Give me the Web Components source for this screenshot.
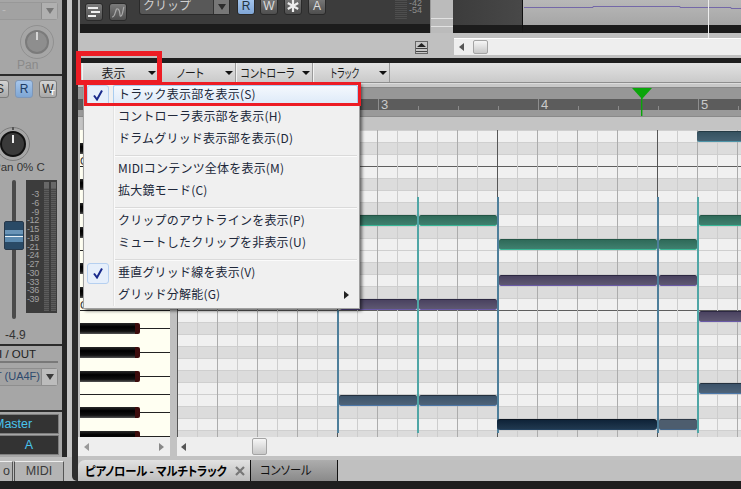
<!DOCTYPE html>
<html lang="ja">
<head>
<meta charset="utf-8">
<title>ピアノロール</title>
<style>
  html, body { margin: 0; padding: 0; background: #bcbcbc; }
  body { font-family: "Noto Sans CJK JP", "Noto Sans", sans-serif; font-size: 12px; color: #222; }
</style>
</head>
<body>
<daw-window>
  <mixer-strip></mixer-strip>
  <daw-main>
    <top-band></top-band>
    <lane-scroll></lane-scroll>
    <view-toolbar>
      <tool-menu>表示</tool-menu>
      <tool-menu style="--sx:.9">ノート</tool-menu>
      <tool-menu style="--sx:.83">コントローラ</tool-menu>
      <tool-menu style="--sx:.72">トラック</tool-menu>
    </view-toolbar>
    <time-ruler></time-ruler>
    <piano-roll>
      <piano-keys></piano-keys>
      <note-grid></note-grid>
    </piano-roll>
    <roll-scrolls></roll-scrolls>
    <tab-row></tab-row>
  </daw-main>

  <view-menu>
    <menu-item checked hot>トラック表示部を表示(S)</menu-item>
    <menu-item>コントローラ表示部を表示(H)</menu-item>
    <menu-item>ドラムグリッド表示部を表示(D)</menu-item>
    <menu-sep></menu-sep>
    <menu-item>MIDIコンテンツ全体を表示(M)</menu-item>
    <menu-item>拡大鏡モード(C)</menu-item>
    <menu-sep></menu-sep>
    <menu-item>クリップのアウトラインを表示(P)</menu-item>
    <menu-item>ミュートしたクリップを非表示(U)</menu-item>
    <menu-sep></menu-sep>
    <menu-item checked>垂直グリッド線を表示(V)</menu-item>
    <menu-item sub>グリッド分解能(G)</menu-item>
  </view-menu>
  <red-box style="left:76px;top:51px;width:86px;height:34px;border-width:5px"></red-box>
  <red-box style="left:84px;top:82px;width:277px;height:24px;border-width:3px"></red-box>
</daw-window>

<script>
class ShadowBase extends HTMLElement {
    constructor(html) {
        super();
        this.attachShadow({ mode: 'open' }).innerHTML = html;
    }
}

const LATIN = '"Liberation Sans", "Noto Sans", sans-serif';

class DawWindow extends ShadowBase {
    constructor() {
        super(`<style>
            :host { display: flex; position: relative; width: 741px; height: 489px; overflow: hidden; background: #bcbcbc; }
        </style><slot></slot>`);
    }
}

class DawMain extends ShadowBase {
    constructor() {
        super(`<style>
            :host { display: flex; flex-direction: column; width: 663px; height: 489px; }
        </style><slot></slot>`);
    }
}

class MixerStrip extends ShadowBase {
    constructor() {
        const scale = [3, 6, 9, 12, 15, 18, 21, 24, 27, 30, 33, 36, 39].map(n => `<span>-${n}</span>`).join('');
        super(`<style>
            :host { display: flex; flex-direction: column; width: 78px; height: 489px; flex: none; font-family: ${LATIN}; }
            .body { display: flex; height: 481px; }
            .left { width: 72px; display: flex; flex-direction: column; }
            .upper { display: flex; height: 457px; }
            .strip { width: 62px; overflow: hidden; background: #a6a6a6; display: flex; flex-direction: column; }
            .black { width: 5px; background: #262626; }
            .light { width: 5px; background: #c6c6c6; }
            .dark { width: 6px; background: #2e2e2e; border-radius: 0 0 0 5px; }
            .bar { height: 8px; background: #1e1e1e; }
            .sec1 { height: 74px; display: flex; flex-direction: column; }
            .sel { display: flex; height: 18px; margin: 2px 4px 0 -4px; border: 1px solid #989898; border-radius: 3px; background: #a2a2a2; box-sizing: border-box; color: #bbb; line-height: 15px; }
            .sel .v { flex: 1; padding-left: 5px; white-space: nowrap; overflow: hidden; }
            .sel .a { width: 15px; border-left: 1px solid #8c8c8c; display: flex; align-items: center; justify-content: center; background: #b0b0b0; }
            .tri { width: 0; height: 0; border-left: 4px solid transparent; border-right: 4px solid transparent; border-top: 6px solid #3a3a3a; }
            .knob1 { display: block; margin: 5px 0 0 20px; }
            .pan { color: #8a8a8a; font-size: 12px; line-height: 14px; margin: -1px 0 0 17px; }
            .rule { height: 2px; background: #2c2c2c; flex: none; }
            .sec2 { height: 268px; flex: none; }
            .btns { display: flex; gap: 6px; margin: 4px 0 0 -9px; }
            .btn { width: 18px; height: 18px; box-sizing: border-box; border-radius: 3px; border: 1px solid #7c7c7c; background: linear-gradient(#d4d4d4, #a8a8a8); display: flex; align-items: center; justify-content: center; color: #333; font-size: 12px; position: relative; }
            .btn.on { background: linear-gradient(#a6c6ec, #7fa6d4); border-color: #7e97b8; color: #1e3c66; }
            .btn sub { position: absolute; right: 1px; bottom: 0; color: #fff; font-size: 8px; line-height: 8px; font-weight: bold; }
            .knob2 { display: block; margin: 28px 0 0 -5px; }
            .pan2 { white-space: nowrap; font-size: 11.5px; line-height: 12px; margin: -1px 0 0 -7px; color: #333; }
            .fade { position: relative; display: flex; margin-top: 7px; height: 139px; }
            .slotw { width: 26px; display: flex; justify-content: center; }
            .slot { width: 4px; margin-left: 2px; background: #4a4a4a; border-radius: 2px; }
            .cap { position: absolute; left: 4px; top: 41px; width: 20px; height: 29px; box-sizing: border-box; border-radius: 2px; border: 1px solid #27384a;
                   background: linear-gradient(#2a4a66 0 8px, #6a95b8 8px 12px, #3f6d92 12px 14px, #e9f1f6 14px 15px, #5d8bb0 15px 20px, #2a4a66 20px); }
            .meter { width: 31px; height: 133px; background: #3c3c3c; display: flex; }
            .nums { width: 13px; padding: 10px 0 0 0; display: flex; flex-direction: column; align-items: flex-end; font-size: 9px; letter-spacing: -.3px; color: #a2a2a2; flex: none; }
            .nums span { height: 8.75px; line-height: 8.75px; }
            .cols { display: flex; gap: 2px; margin: 2px 0 0 5px; }
            .col { width: 5px; height: 129px; background: linear-gradient(#686868 0 6px, transparent 6px), repeating-linear-gradient(#5c5c5c 0 1px, #484848 1px 2px); }
            .val { line-height: 14px; margin: 9px 0 0 5px; color: #333; }
            .sec3 { height: 64px; flex: none; }
            .io { font-size: 11.5px; line-height: 14px; padding-top: 1px; margin-left: -22px; white-space: nowrap; color: #222; }
            .hr { height: 2px; background: #797979; margin: 0 4px 0 0; }
            .sel2 { display: flex; height: 18px; margin: 5px 4px 0 -4px; border: 1px solid #8e8e8e; border-radius: 3px; box-sizing: border-box; background: #a2a2a2; color: #2e4a6e; line-height: 15px; }
            .sel2 .v { flex: 1; display: flex; justify-content: flex-end; white-space: nowrap; overflow: hidden; padding-right: 1px; font-size: 11px; }
            .sel2 .a { width: 15px; border-left: 1px solid #8c8c8c; display: flex; align-items: center; justify-content: center; background: #bcbcbc; flex: none; }
            .sec4 { flex: 1; padding-top: 2px; }
            .f { height: 18px; background: #333; border: 1px solid #7e7e7e; border-left: 0; margin-right: 3px; color: #49c4ee; line-height: 18px; font-size: 12.5px; white-space: nowrap; overflow: hidden; }
            .f + .f { margin-top: 1px; text-align: center; }
            .tabs { height: 24px; background: #bdbdbd; display: flex; padding-top: 4px; box-sizing: border-box; }
            .tab { border: 1px solid #4e4e4e; border-bottom: 0; border-top-color: #eee; border-right-color: #555; background: #b4b4b4; color: #3a3a3a; line-height: 19px; text-align: center; box-sizing: border-box; font-size: 12.5px; }
            .t1 { width: 13px; text-align: right; border-left: 0; overflow: hidden; padding-right: 2px; }
            .t2 { width: 50px; margin-left: 1px; }
        </style>
        <div class="body">
          <div class="left">
            <div class="upper">
              <div class="strip">
                <div class="sec1">
                  <div class="sel"><div class="v">-</div><div class="a"><div class="tri" style="border-top-color:#777"></div></div></div>
                  <svg class="knob1" width="34" height="34" viewBox="0 0 34 34">
                    <circle cx="17" cy="17" r="16.5" fill="none" stroke="#909090"/>
                    <circle cx="17" cy="17" r="11" fill="#8e8e8e" stroke="#7b7b7b" stroke-width="2"/>
                    <line x1="17" y1="7" x2="17" y2="15" stroke="#d6d6d6" stroke-width="2"/>
                  </svg>
                  <div class="pan">Pan</div>
                </div>
                <div class="rule"></div>
                <div class="sec2">
                  <div class="btns">
                    <div class="btn">S</div>
                    <div class="btn on">R</div>
                    <div class="btn">W<sub>T</sub></div>
                  </div>
                  <svg class="knob2" width="36" height="36" viewBox="0 0 36 36">
                    <circle cx="18" cy="18" r="16.5" fill="none" stroke="#7c7c7c"/>
                    <circle cx="18" cy="18" r="12" fill="#3a3a3a" stroke="#111" stroke-width="2"/>
                    <line x1="18" y1="9" x2="18" y2="17" stroke="#eee" stroke-width="2"/>
                    <line x1="18" y1="1" x2="18" y2="4" stroke="#555" stroke-width="2"/>
                  </svg>
                  <div class="pan2">Pan 0% C</div>
                  <div class="fade">
                    <div class="slotw"><div class="slot"></div></div>
                    <div class="meter">
                      <div class="nums">${scale}</div>
                      <div class="cols"><div class="col"></div><div class="col"></div></div>
                    </div>
                    <div class="cap"></div>
                  </div>
                  <div class="val">-4.9</div>
                </div>
                <div class="rule"></div>
                <div class="sec3">
                  <div class="io">MIDI / OUT</div>
                  <div class="hr"></div>
                  <div class="sel2"><div class="v">T (UA4F)</div><div class="a"><div class="tri"></div></div></div>
                </div>
                <div class="rule"></div>
                <div class="sec4">
                  <div class="f" style="margin-left:-6px">Master</div>
                  <div class="f">A</div>
                </div>
              </div>
              <div class="black"></div>
              <div class="light"></div>
            </div>
            <div class="tabs"><div class="tab t1">o</div><div class="tab t2">MIDI</div></div>
          </div>
          <div class="dark"></div>
        </div>
        <div class="bar"></div>`);
    }
}

class TopBand extends ShadowBase {
    constructor() {
        super(`<style>
            :host { display: flex; position: relative; height: 33px; flex: none; }
            .edge { width: 2px; background: #b4b4b4; }
            .panel { width: 350px; background: #1c1c1c; }
            .inner { height: 24px; background: #3c3c3c; display: flex; align-items: flex-start; overflow: hidden; position: relative; }
            .b { width: 18px; height: 18px; box-sizing: border-box; border-radius: 3px; border: 1px solid #2a2a2a; background: linear-gradient(#7b7b7b, #4e4e4e); display: flex; align-items: center; justify-content: center; color: #ddd; font: 12px ${LATIN}; flex: none; }
            .sel { width: 91px; height: 15px; margin-left: 12px; box-sizing: border-box; background: #585858; border: 1px solid #2a2a2a; border-top: 0; border-radius: 0 0 3px 3px; color: #cfcfcf; line-height: 10px; padding-left: 3px; display: flex; justify-content: space-between; flex: none; }
            .sel i { width: 15px; border-left: 1px solid #333; background: #777; display: flex; align-items: center; justify-content: center; }
            .tri { width: 0; height: 0; border-left: 4px solid transparent; border-right: 4px solid transparent; border-top: 6px solid #2c2c2c; }
            .s { margin-top: -3px; }
            .on { background: linear-gradient(#a8c8ee, #80a6d6); color: #234; }
            .meter { width: 12px; height: 20px; margin-left: 69px; background: repeating-linear-gradient(#4e4e4e 0 1px, #3c3c3c 1px 2px); border-radius: 0 0 2px 2px; flex: none; }
            .nums { margin-left: 2px; font: 9px/7px ${LATIN}; color: #8c8c8c; }
            .col { width: 23px; background: #bbb; box-sizing: border-box; position: relative; border-left: 1px solid #999; }
            .col i { display: block; position: absolute; left: 0; right: 0; height: 1px; background: #e2e2e2; }
            .gap { width: 70px; background: linear-gradient(90deg, #3c3c3c, #484848); border-bottom: 8px solid #1c1c1c; border-right: 1px solid #111; box-sizing: border-box; }
            .lane { flex: 1; border-bottom: 8px solid #1c1c1c; background: linear-gradient(#b8b8b8, #a6a6a6); }
            .lane svg { display: block; }
            .pos { position: absolute; left: 630px; top: 0; width: 1px; height: 38px; background: #eee; }
        </style>
        <div class="edge"></div>
        <div class="panel"><div class="inner">
          <div class="b" style="margin:3px 0 0 5px">
            <svg width="14" height="12" viewBox="0 0 14 12"><path d="M1 2h10M4 6h9M1 10h8" stroke="#eee" stroke-width="2" fill="none"/></svg>
          </div>
          <div class="b" style="margin:3px 0 0 6px">
            <svg width="14" height="12" viewBox="0 0 14 12"><path d="M1 11C5 11 4 1 7 3s1 8 3 7 2-8 3-9" stroke="#aaa" stroke-width="1.2" fill="none"/></svg>
          </div>
          <div class="sel">クリップ<i><span class="tri"></span></i></div>
          <div class="b s on" style="margin-left:7px">R</div>
          <div class="b s" style="margin-left:5px">W</div>
          <div class="b s" style="margin-left:6px">
            <svg width="12" height="12" viewBox="0 0 12 12"><path d="M6 0v12M.8 3l10.4 6M.8 9l10.4-6" stroke="#eee" stroke-width="2.2"/></svg>
          </div>
          <div class="b s" style="margin-left:6px">A</div>
          <div class="meter"></div>
          <div class="nums">-42<br>-54</div>
        </div></div>
        <div class="col"><i style="top:18px"></i><i style="top:26px"></i></div>
        <div class="gap"></div>
        <div class="lane">
          <svg width="218" height="25"><path d="M1 7.5H70V6.5H157V7.5H208V8.5H218" stroke="#7468a8" fill="none"/></svg>
        </div>
        <div class="pos"></div>`);
    }
}

class ScrollTrack extends ShadowBase {
    constructor() {
        super(`<style>
            :host { display: flex; align-items: center; position: relative; background: #eee; box-sizing: border-box; }
            .l, .r { width: 0; height: 0; border-top: 4px solid transparent; border-bottom: 4px solid transparent; flex: none; }
            .l { border-right: 5px solid #555; }
            .r { border-left: 5px solid #888; margin-left: auto; }
            .t { position: absolute; top: 1px; bottom: 1px; width: 15px; box-sizing: border-box; border: 1px solid #a4a4a4; border-radius: 2px; background: linear-gradient(#f6f6f6, #c8c8c8); }
        </style><div class="l"></div><div class="r"></div><div class="t"></div>`);
    }
    connectedCallback() {
        const sd = this.shadowRoot;
        sd.querySelector('.l').style.marginLeft = (this.getAttribute('arrow') || 5) + 'px';
        const l = sd.querySelector('.l');
        if (this.hasAttribute('lgray')) l.style.borderRightColor = '#999';
        const r = sd.querySelector('.r');
        if (this.hasAttribute('end')) { r.style.marginRight = this.getAttribute('end') + 'px'; } else { r.style.display = 'none'; }
        const t = sd.querySelector('.t');
        if (this.hasAttribute('thumb')) { t.style.left = this.getAttribute('thumb') + 'px'; } else { t.style.display = 'none'; }
    }
}

class LaneScroll extends ShadowBase {
    constructor() {
        super(`<style>
            :host { display: flex; height: 25px; flex: none; background: #c0c0c0; justify-content: space-between; padding-top: 5px; box-sizing: border-box; }
            .eject { margin: 3px 0 0 337px; width: 13px; height: 13px; box-sizing: border-box; background: #c6c6c6; border: 1px solid #666; display: flex; flex-direction: column; align-items: center; }
            .eject svg { display: block; }
            scroll-track { width: 287px; height: 17px; border-top: 1px solid #fff; }
        </style>
        <div class="eject"><svg width="11" height="11" viewBox="0 0 11 11"><path d="M5.5 1L10 5H1z" fill="#222"/><path d="M0 6.5h11M0 9.5h11" stroke="#444"/></svg></div>
        <scroll-track arrow="5" thumb="19"></scroll-track>`);
    }
}

class ViewToolbar extends ShadowBase {
    constructor() {
        super(`<style>
            :host { display: flex; height: 25px; flex: none; box-sizing: border-box; border-top: 5px solid #1e1e1e; padding-left: 4px;
                    background: linear-gradient(#e2e2e2, #cacaca); border-bottom: 1px solid #8e8e8e; }
        </style><slot></slot>`);
    }
}

class ToolMenu extends ShadowBase {
    constructor() {
        super(`<style>
            :host { display: flex; align-items: center; width: 77px; box-sizing: border-box; border-right: 1px solid #9a9a9a; border-left: 1px solid #f2f2f2; color: #1c1c1c; }
            .lab { width: 61px; display: flex; justify-content: center; }
            .lab span { display: inline-block; transform: scaleX(var(--sx, 1)); font-feature-settings: "palt"; white-space: nowrap; font-size: 12px; line-height: 16px; }
            .tri { margin-left: 4px; width: 0; height: 0; border-left: 4px solid transparent; border-right: 4px solid transparent; border-top: 4px solid #111; }
        </style><div class="lab"><span><slot></slot></span></div><span class="tri"></span>`);
    }
}

class TimeRuler extends ShadowBase {
    constructor() {
        const cells = [2, 3, 4, 5].map(n => `<div class="cell">${n}</div>`).join('');
        super(`<style>
            :host { display: block; position: relative; height: 47px; flex: none; background: #c4c4c4; border-top: 1px solid #dcdcdc; box-sizing: border-box; overflow: hidden; }
            .a { height: 3px; background: #c8c8c8; border-bottom: 1px solid #888; }
            .b { height: 11px; background: #979797; }
            .c { height: 11px; background-color: #5c5c5c; display: flex; padding-left: 140px;
                 background-image: repeating-linear-gradient(90deg, #8a8a8a 0 1px, transparent 1px 40px); background-size: 100% 4px; background-position: 20px 100%; background-repeat: no-repeat; }
            .cell { width: 160px; flex: none; box-sizing: border-box; border-left: 1px solid #8e8e8e; padding-left: 2px; color: #cacaca; font: 13px/12px ${LATIN}; }
            .d { height: 7px; background: #9a9a9a; border-bottom: 1px solid #8a8a8a; box-sizing: border-box; }
            .e { height: 13px; background: #c4c4c4; border-bottom: 1px solid #9c9c9c; box-sizing: content-box; }
            .mark { position: absolute; left: 553px; top: 4px; }
        </style>
        <div class="a"></div><div class="b"></div><div class="c">${cells}</div><div class="d"></div><div class="e"></div>
        <svg class="mark" width="22" height="29" viewBox="0 0 22 29"><path d="M1 0H21L11 11z" fill="#0aa50a"/><rect x="10" y="10" width="1.4" height="18" fill="#0aa50a"/></svg>`);
    }
}

class PianoRoll extends ShadowBase {
    constructor() {
        super(`<style>
            :host { display: flex; height: 307px; flex: none; overflow: hidden; background: #c0c0c0; padding-left: 2px; }
        </style><slot></slot>`);
    }
}

const BLACK_ROWS = [1, 4, 6, 8, 11];

class PianoKeys extends ShadowBase {
    constructor() {
        let rows = '';
        for (let k = 0; k < 26; k++) {
            const m = k % 12;
            const line = m === 3 || m === 10;
            const key = BLACK_ROWS.includes(m) ? '<i class="key"></i><i class="ln"></i>' : '';
            const c = m === 2 ? '<b class="oct">C</b>' : '';
            rows += `<div class="row${line ? ' line' : ''}">${key}${c}</div>`;
        }
        super(`<style>
            :host { display: block; width: 90px; flex: none; margin-right: 7px; background: #fffff2; overflow: hidden; }
            .row { height: 12px; box-sizing: border-box; display: flex; align-items: center; position: relative; }
            .row.line { border-top: 1px solid #222; }
            .key { width: 55px; height: 11px; flex: none; background: linear-gradient(#2a2a2a, #000 35%, #111 75%, #555); border-right: 5px solid #3c0c0c; border-radius: 0 2px 2px 0; }
            .ln { flex: 1; height: 1px; background: #222; }
            .oct { position: absolute; left: 0; bottom: -1px; font: 11px/11px ${LATIN}; color: #333; }
        </style>${rows}`);
    }
}

class NoteGrid extends ShadowBase {
    constructor() {
        let rows = '';
        for (let k = 0; k < 26; k++) {
            const m = k % 12;
            rows += `<div class="row${BLACK_ROWS.includes(m) ? ' dk' : ''}${m === 3 ? ' oct' : ''}"></div>`;
        }
        // k = row, x1/x2 = page coordinates of the clip
        const notes = [
            [0, 697, 745, 'sl'],
            [7, 350, 416.5, 'gr'], [7, 418.5, 496.5, 'gr'], [7, 698.5, 745, 'gr'],
            [9, 498.5, 656.5, 'gr'], [9, 658.5, 696.5, 'gr'],
            [12, 498.5, 656.5, 'pu'], [12, 658.5, 696.5, 'pu'],
            [14, 340, 416.5, 'pu'], [14, 418.5, 496.5, 'pu'], [15, 698.5, 745, 'pu'],
            [21, 698.5, 745, 'bl'],
            [22, 338.5, 416.5, 'bl'], [22, 418.5, 496.5, 'bl'],
            [24, 497, 657, 'na'], [24, 658.5, 696.5, 'gy']
        ].map(([k, a, b, c]) => `<div class="n ${c}" style="left:${a - 177}px;top:${12 * k + 1}px;width:${b - a}px"></div>`).join('');
        const clips = [[337, 'bl', 180], [417, 'te', 67], [497, 'bl', 67], [657, 'bl', 67], [697, 'te', 67]]
            .map(([x, c, y]) => `<div class="v ${c}" style="left:${x - 177}px;top:${y}px;height:${303 - y}px"></div>`).join('');
        super(`<style>
            :host { display: block; position: relative; flex: 1; overflow: hidden; background: #f0f0f0; }
            .row { height: 12px; box-sizing: border-box; border-top: 1px solid #cfcfcf; background: #f0f0f0; }
            .row.dk { background: #dcdcdc; }
            .row.oct { border-top-color: #5e5e5e; }
            .vl { position: absolute; inset: 0; background-image:
                    repeating-linear-gradient(90deg, #565656 0 1px, transparent 1px 160px),
                    repeating-linear-gradient(90deg, #acacac 0 1px, transparent 1px 40px),
                    repeating-linear-gradient(90deg, #cdcdcd 0 1px, transparent 1px 20px); }
            .v { position: absolute; width: 2px; }
            .v.bl { background: #4e7f9b; }
            .v.te { background: #4fa6a6; }
            .n { position: absolute; height: 11px; box-sizing: border-box; border-radius: 2px; border-top: 1px solid; border-bottom: 1px solid; }
            .gr { background: linear-gradient(#2f6a59, #3f806f); border-top-color: #235546; border-bottom-color: #38b797; }
            .pu { background: linear-gradient(#4a4260, #5e5872); border-top-color: #2c2842; border-bottom-color: #6a5aa8; }
            .bl { background: linear-gradient(#3c536a, #4e6379); border-top-color: #24313f; border-bottom-color: #4c78aa; }
            .sl { background: linear-gradient(#365260, #466272); border-top-color: #243a44; border-bottom-color: #4e94a8; }
            .na { background: linear-gradient(#0f2338, #20384f); border-top-color: #0a1420; border-bottom-color: #23415e; border-radius: 3px; }
            .gy { background: #4d5d6e; border-top-color: #2e3a48; border-bottom-color: #44668a; }
        </style>${rows}<div class="vl"></div>${clips}${notes}`);
    }
}

class RollScrolls extends ShadowBase {
    constructor() {
        super(`<style>
            :host { display: flex; height: 23px; flex: none; padding: 0 0 4px 0; box-sizing: border-box; background: #c2c2c2; }
            .a { width: 92px; margin-right: 7px; height: 19px; }
            .b { flex: 1; height: 19px; }
        </style>
        <scroll-track class="a" arrow="6" end="6" lgray></scroll-track>
        <scroll-track class="b" arrow="4" thumb="75"></scroll-track>`);
    }
}

class TabRow extends ShadowBase {
    constructor() {
        super(`<style>
            :host { display: flex; flex-direction: column; flex: 1; }
            .tabs { height: 21px; display: flex; background: #c0c0c0; flex: none; box-sizing: border-box; }
            .on { width: 172px; box-sizing: border-box; background: linear-gradient(#e2e2e2, #bdbdbd); border-radius: 7px 0 0 0; padding-left: 7px; display: flex; align-items: center; font-weight: 700; color: #000; }
            .on span { display: block; width: 150px; flex: none; transform: scaleX(.91); transform-origin: 0 50%; font-feature-settings: "palt"; letter-spacing: -.2px; white-space: nowrap; font-size: 12.5px; }
            .on svg { margin-left: auto; margin-right: 5px; }
            .off { width: 88px; box-sizing: border-box; background: linear-gradient(#adadad, #8a8a8a); border-left: 1px solid #111; border-right: 1px solid #111; padding-left: 9px; line-height: 19px; color: #111; }
            .off span { display: inline-block; transform: scaleX(.9); transform-origin: 0 50%; font-feature-settings: "palt"; font-size: 12.5px; white-space: nowrap; }
            .rest { flex: 1; background: #c0c0c0; }
            .bar { flex: 1; background: #1e1e1e; }
        </style>
        <div class="tabs">
          <div class="on"><span>ピアノロール - マルチトラック</span>
            <svg width="10" height="10" viewBox="0 0 10 10"><path d="M1 1l8 8M9 1L1 9" stroke="#777" stroke-width="2.2"/></svg></div>
          <div class="off"><span>コンソール</span></div>
          <div class="rest"></div>
        </div>
        <div class="bar"></div>`);
    }
}

class ViewMenu extends ShadowBase {
    constructor() {
        super(`<style>
            :host { display: block; position: absolute; left: 83px; top: 83px; width: 277px; height: 226px; box-sizing: border-box;
                    background: #f0f0f0; border: 1px solid #a0a0a0; box-shadow: 2px 2px 3px rgba(0,0,0,.55); }
            .gut { position: absolute; left: 29px; top: 0; bottom: 2px; width: 1px; background: #e2e2e2; border-right: 1px solid #fafafa; }
        </style><div class="gut"></div><slot></slot>`);
    }
}

class MenuItem extends ShadowBase {
    constructor() {
        super(`<style>
            :host { display: flex; align-items: center; position: relative; height: 22px; color: #20283a; }
            .chk { width: 22px; height: 21px; margin-left: 3px; box-sizing: border-box; display: flex; align-items: center; justify-content: center; border-radius: 3px; border: 1px solid transparent; flex: none; }
            .chk svg { visibility: hidden; }
            :host([checked]) .chk { background: #e6effb; border-color: #b6d0f0; }
            :host([checked]) .chk svg { visibility: visible; }
            .txt { flex: 1; margin: 0 1px 0 4px; padding-left: 4px; height: 21px; line-height: 15px; letter-spacing: .2px; white-space: nowrap; box-sizing: border-box; border: 1px solid transparent; border-radius: 2px; }
            :host([hot]) .txt { background: linear-gradient(#f4f8fd, #dce9f8); border-color: #a9cdf0; }
            .arr { display: none; position: absolute; right: 10px; top: 7px; width: 0; height: 0; border-top: 4px solid transparent; border-bottom: 4px solid transparent; border-left: 5px solid #222; }
            :host([sub]) .arr { display: block; }
        </style>
        <div class="chk"><svg width="12" height="12" viewBox="0 0 12 12"><path d="M2 6.5l3 4L10 1.5" fill="none" stroke="#1a2a8c" stroke-width="2"/></svg></div>
        <div class="txt"><slot></slot></div><div class="arr"></div>`);
    }
}

class MenuSep extends ShadowBase {
    constructor() {
        super(`<style>
            :host { display: block; height: 8px; box-sizing: border-box; padding: 5px 2px 0 30px; }
            div { height: 1px; background: #dadada; border-bottom: 1px solid #fbfbfb; }
        </style><div></div>`);
    }
}

class RedBox extends ShadowBase {
    constructor() {
        super(`<style>
            :host { display: block; position: absolute; box-sizing: border-box; border: 3px solid #ed1c24; }
        </style>`);
    }
}

customElements.define('daw-window', DawWindow);
customElements.define('daw-main', DawMain);
customElements.define('mixer-strip', MixerStrip);
customElements.define('top-band', TopBand);
customElements.define('scroll-track', ScrollTrack);
customElements.define('lane-scroll', LaneScroll);
customElements.define('view-toolbar', ViewToolbar);
customElements.define('tool-menu', ToolMenu);
customElements.define('time-ruler', TimeRuler);
customElements.define('piano-roll', PianoRoll);
customElements.define('piano-keys', PianoKeys);
customElements.define('note-grid', NoteGrid);
customElements.define('roll-scrolls', RollScrolls);
customElements.define('tab-row', TabRow);
customElements.define('view-menu', ViewMenu);
customElements.define('menu-item', MenuItem);
customElements.define('menu-sep', MenuSep);
customElements.define('red-box', RedBox);
</script>
</body>
</html>
